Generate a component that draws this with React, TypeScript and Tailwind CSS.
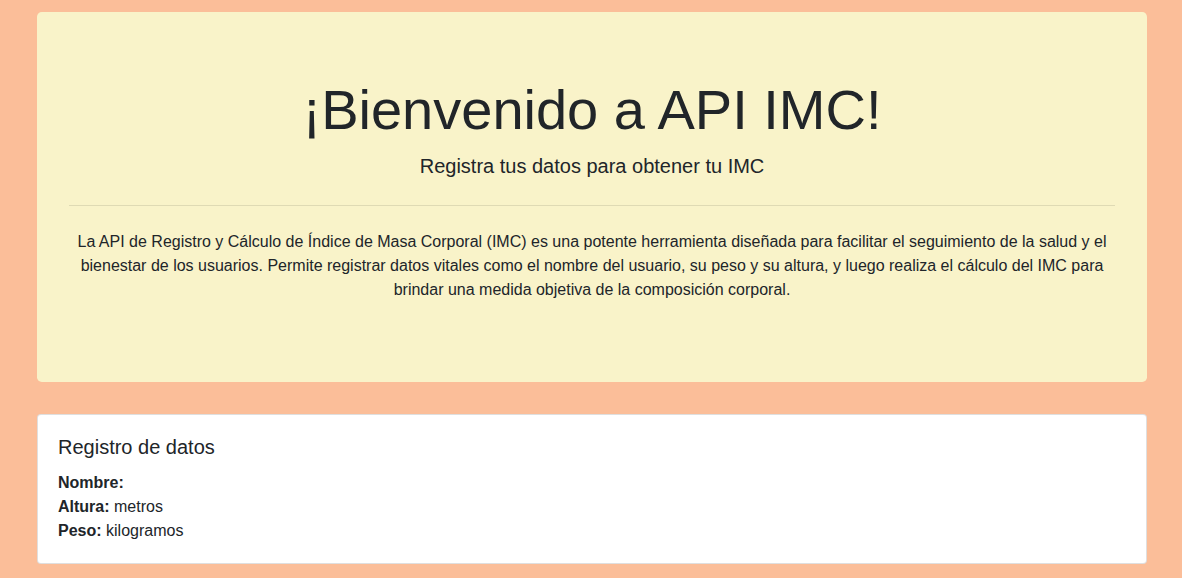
const App = () => {
  return (
    <div className="min-h-[578px] bg-[#fbbe99] pt-3 text-[#212529] font-['Liberation_Sans',Arial,sans-serif]">
      <div className="mx-auto w-[1110px] translate-x-[1px]">
        <div className="mb-8 rounded-[4.8px] bg-[#f9f3c9] px-8 py-16 text-center">
          <h1 className="mb-2 text-[56px] font-light leading-[1.2]">¡Bienvenido a API IMC!</h1>
          <p className="mb-4 text-[20px] font-light leading-[30px]">Registra tus datos para obtener tu IMC</p>
          <hr className="my-6 border-t border-black/10" />
          <p className="mb-4 text-base leading-6">
            La API de Registro y Cálculo de Índice de Masa Corporal (IMC) es una potente herramienta diseñada para facilitar el seguimiento de la salud y el bienestar de los usuarios. Permite registrar datos vitales como el nombre del usuario, su peso y su altura, y luego realiza el cálculo del IMC para brindar una medida objetiva de la composición corporal.
          </p>
        </div>

        <div className="rounded border border-black/[0.125] bg-white p-5">
          <h5 className="mb-3 text-[20px] leading-6">Registro de datos</h5>
          <div className="text-base leading-6">
            <div><b>Nombre:</b> </div>
            <div><b>Altura:</b> metros</div>
            <div><b>Peso:</b> kilogramos</div>
          </div>
        </div>
      </div>
    </div>
  );
};

export default App;
